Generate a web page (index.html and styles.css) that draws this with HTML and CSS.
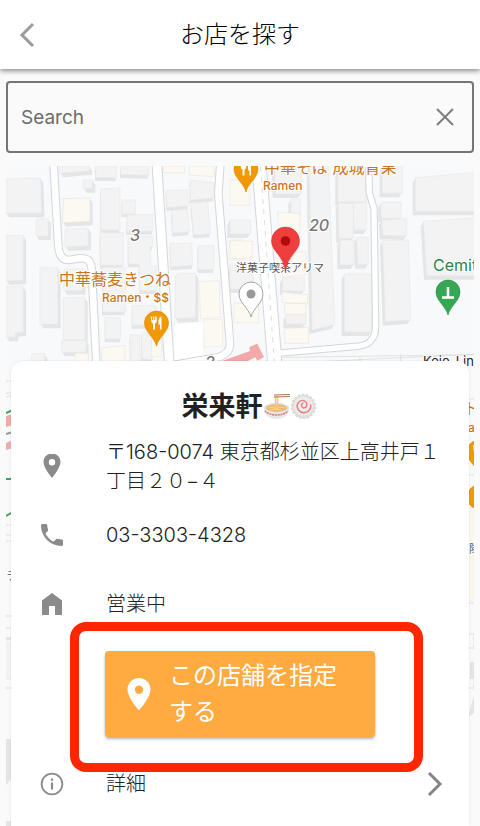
FILE: index.html
```html
<!DOCTYPE html>
<html lang="ja">
<head>
<meta charset="utf-8">
<meta name="viewport" content="width=device-width, initial-scale=1">
<title>お店を探す</title>
<link rel="stylesheet" href="styles.css">
</head>
<body>
<header class="bar">
  <button class="icon-button" type="button" aria-label="戻る">
    <svg width="16" height="26" viewBox="0 0 16 26" fill="none" stroke="#9b9b9b" stroke-width="3"><path d="M14 2 3 13l11 11"/></svg>
  </button>
  <h1 class="bar-title">お店を探す</h1>
</header>
<main class="content">
  <form class="search">
    <input class="search-input" type="text" placeholder="Search" aria-label="Search">
    <button class="icon-button" type="button" aria-label="クリア">
      <svg width="18" height="18" viewBox="0 0 18 18" fill="none" stroke="#7d7d7d" stroke-width="2"><path d="m1 1 16 16M17 1 1 17"/></svg>
    </button>
  </form>
  <div class="stage">
    <svg class="map" viewBox="6 166 468 660" preserveAspectRatio="xMidYMin slice" aria-label="地図">
      <defs>
        <g id="fork" fill="#fff"><path d="M-6-6.500h1.400v3.500h1v-3.500h1.400v3.500h1v-3.500h1.400v4.500q0 2-1.700 2.500v6h-2v-6q-1.700-.5-1.700-2.500zM2-2q0-4 3-4.500V6.500H3.500V1.500H2z"/></g>
        <path id="pin" d="M0 23C-2 14-12 9-12 0a12 12 0 0 1 24 0C12 9 2 14 0 23z"/>
        <path id="west" d="M18 58 28 56 122 54 125 160H18zM108 177l37-1v52h-37zM18 227l52-1v135l-52 2zM18 380l52-2v138l-23 2-1 14H18zM178 18h90v14l-88 8zM250 60h28v26h-28zM190 116l80-2v70l-82 4zM195 208l70-4v54l-70 3zM120 323h54v170h-54zM192 328l56-2v66h-56zM190 414l65-2v127h-65zM185 542h73v35h-73zM95 581h39v25H95zM527 345l22-5h38v133l-62 3z"/>
        <path id="mid" d="M287 18h62v35h-62zM362 18h84v28l-84-2zM302 86l58-2v126h-57zM366 120h40v42h-40zM382 164h76v50h-78zM300 218h70v98h-68zM385 230h73v30h-7v58h19v74h-50l-3-80h-32zM308 322h68v134h-68zM397 437h70v59h-70zM316 472l46 2v63h-46zM390 524l30 2v78h-28zM425 518l32 1v80l-31-3zM499 92l64-3 3 49-65 5zM570 60l71 8v46l-70 6zM572 133l51-5 9 94-50 3zM514 152l49-5 5 68-49 5zM510 250h65l3 66-65 5zM594 257h48v72h-48zM690 312h40v76h-40z"/>
        <path id="east" d="M134 18h80v84h-78zM183 118h28v55h-28zM238 18h57l19 477-68 15zM324 18h85v108h-85zM325 130h45v106h-43zM370 128h40v82h-38zM330 240h42v75h-42zM380 232h35v82h-32zM343 342h82v174h-82zM457 18h60v82h-60zM453 127h60v48h-60zM455 180l75-4v52l-72-2zM458 242l77-2 7 240-76 5zM0 180h62v42H0zM0 332h70v55H0zM158 353h65v40h-65zM168 465h60v27h-60zM556 53l194-17v118H556zM580 184l170-12v175H590z"/>
      </defs>
      <rect x="6" y="166" width="468" height="660" fill="#f8f9fb"/>
      <g transform="translate(0 160) scale(.3333)" stroke-width="2">
        <use href="#west" x="8" y="12" fill="#e4e5e6"/><use href="#west" x="4" y="6" fill="#e4e5e6"/>
        <use href="#west" fill="#f3f3f3" stroke="#e8e9ea"/>
        <use href="#mid" x="-2" y="10" fill="#e4e5e6"/>
        <use href="#mid" fill="#f3f3f3" stroke="#e8e9ea"/>
        <path fill="#fcf9f2" stroke="#ece7df" d="M190 116l80-2v70l-82 4zM597 366l60-5 5 111-60 5zM610 480l58-2v80l-56 4zM305 564l70-8v60h-70zM455 535h30v55h-30zM490 18h64v20h-64zM568 18h75v32l-75-5zM690 240h40v60h-40zM225 580h40v30h-40z"/>
        <path fill="#fff" d="m526 493 85-5-2 105-90 10z"/>
      </g>
      <g transform="translate(230 160) scale(.3333)" stroke-width="2">
        <use href="#east" x="-8" y="12" fill="#e4e5e6"/><use href="#east" x="-4" y="6" fill="#e4e5e6"/>
        <use href="#east" fill="#f3f3f3" stroke="#e8e9ea"/>
        <path fill="#fcf9f2" stroke="#ece7df" d="M0 60h60v76H0zM0 242l68 2-2 52H0zM142 156l68 5v60h-62zM150 276h78v68l-70 8zM155 396l78 8v28l-76-5zM164 430h64v33h-64zM164 506l72-4v48h-72zM12 430h74v58H12z"/>
      </g>
      <g transform="translate(0 160) scale(.3333)" fill="none" stroke-linejoin="round">
        <g stroke="#d2d6da" stroke-width="26"><path d="M160 0 175 258Q178 300 205 300L240 295Q272 292 275 325L290 630"/><path d="M662 0 655 100 690 550Q692 582 650 593L520 615"/><path d="m470 0 39 630" stroke-width="32"/></g>
        <g stroke="#fff" stroke-width="20"><path d="M160 0 175 258Q178 300 205 300L240 295Q272 292 275 325L290 630"/><path d="M662 0 655 100 690 550Q692 582 650 593L520 615"/><path d="m470 0 39 630" stroke-width="26"/></g>
      </g>
      <g transform="translate(230 160) scale(.3333)" fill="none" stroke-linejoin="round">
        <path stroke="#d2d6da" stroke-width="46" d="m86 0 50 630"/>
        <path stroke="#d2d6da" stroke-width="22" d="m416 0 2 100 14 45 5 350Q438 550 390 558L140 580"/>
        <path stroke="#fff" stroke-width="40" d="m86 0 50 630"/>
        <path stroke="#fff" stroke-width="16" d="m416 0 2 100 14 45 5 350Q438 550 390 558L140 580"/>
        <path stroke="#c9cbd0" stroke-width="2" stroke-dasharray="16 16" d="m92 20 42 600"/>
        <path stroke="#d2d6da" stroke-width="2" d="m160 610 590-28M160 592l590-8M390 590v20M512 584v20"/>
        <path fill="#f1aaaa" d="m-30 605 90-32-2-12 24-10 20 40-20 11-6-10-30 15z"/>
      </g>
      <!-- strips of the map that stay visible beside the sheet -->
      <g fill="none" stroke="#dcdfe2">
        <path d="M6 381h7v12H6M6 397l7-2M6 525h7v10H6M6 541h7v30M6 616h7v12H6M6 679h7v9H6M467 399h7M468 475h6M468 603h6M468 634h6v14h-6M468 678h6v10h-6"/>
        <path stroke="#3ea55d" stroke-width="2" d="m6 413 7-3M6 479h7M6 516l7-4"/>
      </g>
      <path fill="#f1aaaa" d="m6 416 7-2v11l-7 2zM6 443l7-3v8l-7 2z"/>
      <path fill="none" stroke="#999" stroke-width="2" d="m6 434 7-2"/>
      <path fill="#e3e4e6" d="M6 637h7v3H6zM6 739h7v38l-7 8zM6 821h7v5H6zM470 662h4v17h-4zM474 695v18l-6 4z"/>
      <path fill="#f2f2f2" d="M6 641h7v38H6z"/>
      <path fill="#fbf6ea" d="M468 510h6v92h-6z"/>
      <g class="map-text">
        <g fill="#c9751c">
          <text x="264" y="173" font-size="16">中華そば 成城青果</text>
          <text class="kind" x="263" y="190" font-size="12">Ramen</text>
          <text x="59" y="285" font-size="16">中華蕎麦きつね</text>
          <text class="kind" x="102" y="302" font-size="12">Ramen・$$</text>
          <text x="463" y="414" font-size="16">ト</text>
          <text class="kind" x="468" y="432" font-size="12">a</text>
        </g>
        <g class="block-number" font-size="16">
          <text x="130" y="241">3</text><text x="309" y="231">20</text><text x="205" y="368">2</text>
        </g>
        <text x="236" y="272" font-size="11" fill="#555">洋菓子喫茶アリマ</text>
        <text x="433" y="271" font-size="16" fill="#238545">Cemitério</text>
        <text x="423" y="366" font-size="13" fill="#222">Keio-Line</text>
        <text x="6" y="580" font-size="11" fill="#555">ラ</text>
        <text x="469" y="553" font-size="11" fill="#555">隊</text>
      </g>
      <g fill="#f29900" stroke="#d98300" stroke-width=".6">
        <use href="#pin" x="246" y="169"/><use href="#pin" x="156.500" y="323"/><use href="#pin" x="479" y="452"/><circle cx="479" cy="497" r="12"/>
      </g>
      <use href="#fork" x="246" y="169"/><use href="#fork" x="156.500" y="323"/><use href="#fork" x="479" y="452"/>
      <use href="#pin" x="251" y="294" fill="#fff" stroke="#a5a5a5"/><circle cx="251" cy="294" r="4.500" fill="#999"/>
      <use href="#pin" x="448" y="292" fill="#34a853" stroke="#238545" stroke-width=".6"/>
      <path fill="none" stroke="#fff" stroke-width="2.500" d="M448 287v11M442 297.500h12"/>
      <path fill="#ef3e3e" stroke="#dc3434" stroke-width=".5" d="M285.500 272.500C284 255 271.500 252 271.500 241a14 14 0 0 1 28 0c0 11-12.500 14-14 31.500z"/>
      <circle cx="285.500" cy="241" r="4.800" fill="#b30b0b"/>
    </svg>
    <section class="sheet">
      <h2 class="shop">
        <span>栄来軒</span>
        <svg width="27" height="27" viewBox="0 0 27 27" aria-hidden="true">
          <ellipse cx="13.500" cy="15" rx="12.500" ry="5" fill="#dcdedf"/><path d="M1 15c0 7 5 11 12.500 11S26 22 26 15q-5 5-12.500 5T1 15z" fill="#e7e8e9"/>
          <ellipse cx="13.500" cy="15" rx="10.500" ry="3.700" fill="#edb768"/>
          <path d="M2 18q4 4 11.500 4T25 18" fill="none" stroke="#dd7770" stroke-width="1.500" stroke-dasharray="2 .7"/>
          <path d="M12.500 3v12M14.500 3v12" stroke="#f4c980" stroke-width="1.500"/><path d="m5 15 5-1 3 2 4-2 5 1M7 17l5-1 7 1" fill="none" stroke="#f8d795"/>
          <path d="m11 2 16-.5M11 4l16-.5" stroke="#ad7750" stroke-width="1.200"/>
        </svg>
        <svg width="27" height="27" viewBox="0 0 27 27" aria-hidden="true">
          <circle cx="13.500" cy="13.500" r="11.300" fill="#e2e2dd"/><circle cx="13.500" cy="13.500" r="11.500" fill="none" stroke="#d9dad4" stroke-width="2.200" stroke-dasharray="2.800 1.200"/>
          <circle cx="13.500" cy="13" r="9.500" fill="#ecece8"/>
          <path d="M13 10q-2.500 1.500-1 3.800t4.200 0Q18 10.500 15 8.300T8.800 9Q5.500 13 8.500 17t8.500 2q4-2 3.800-7" fill="none" stroke="#e77c83" stroke-width="1.400" stroke-linecap="round"/>
        </svg>
      </h2>
      <div class="row">
        <svg class="row-icon" viewBox="0 0 24 24"><path fill="#8b8b8b" fill-rule="evenodd" d="M12-.5c-4.800 0-8.500 3.700-8.500 8.500C3.500 14 12 24 12 24s8.500-10 8.500-16C20.500 3.200 16.800-.5 12-.5zM12 5a3.200 3.200 0 1 1 0 6.400A3.200 3.200 0 0 1 12 5z"/></svg>
        <p class="row-text">〒168-0074 東京都杉並区上高井戸１丁目２０−４</p>
      </div>
      <div class="row">
        <svg class="row-icon" viewBox="0 0 24 24"><path fill="#8b8b8b" d="M1 2.300Q1 1 2.200 1h3.900q1.200 0 1.200 1.200 0 2.300.8 4.400.2.700-.3 1.300L5.400 10.500q2.800 5.500 8.200 8.200l2.600-2.600q.5-.5 1.300-.3 2.100.7 4.300.7 1.200 0 1.200 1.200v4q0 1.300-1.200 1.300C10.300 23 1 13.700 1 2.300z"/></svg>
        <p class="row-text">03-3303-4328</p>
      </div>
      <div class="row">
        <svg class="row-icon" viewBox="0 0 24 24"><path fill="#8b8b8b" d="M2 8.500 12 1l10 7.500V23h-7v-9H9v9H2z"/></svg>
        <p class="row-text">営業中</p>
      </div>
      <div class="action">
        <button class="choose" type="button">
          <svg width="24" height="34" viewBox="0 0 24 34"><path fill="#fff" fill-rule="evenodd" d="M12 1C5.600 1 .5 6 .5 12.300.5 21 12 33.500 12 33.500S23.500 21 23.500 12.300C23.500 6 18.400 1 12 1zm0 7.500a4.200 4.200 0 1 1 0 8.400 4.200 4.200 0 0 1 0-8.400z"/></svg>
          <span>この店舗を指定する</span>
        </button>
        <span class="highlight"></span>
      </div>
      <a class="row" href="#detail">
        <svg class="row-icon info" viewBox="0 0 26 26" fill="none" stroke="#8b8b8b" stroke-width="2"><circle cx="13" cy="13" r="11.200"/><path stroke-width="2.400" d="M13 11.500v7.500M13 7v2.400"/></svg>
        <span class="row-text">詳細</span>
        <svg class="chevron" width="16" height="26" viewBox="0 0 16 26" fill="none" stroke="#858585" stroke-width="3"><path d="m2 2 11 11L2 24"/></svg>
      </a>
    </section>
  </div>
</main>
</body>
</html>
```
FILE: styles.css
```css
* {
  box-sizing: border-box;
}

body {
  display: flex;
  flex-direction: column;
  min-height: 100vh;
  margin: 0;
  background: #fafafa;
  color: #212121;
  font-family: Inter, "Noto Sans CJK JP", sans-serif;
  font-weight: 300;
}

h1,
h2,
p {
  margin: 0;
}

button {
  padding: 0;
  border: 0;
  font: inherit;
}

svg {
  display: block;
  flex: none;
}

.bar {
  display: grid;
  grid-template-columns: 54px 1fr 54px;
  align-items: center;
  height: 69px;
  background: #fff;
  box-shadow: 0 2px 5px rgba(0, 0, 0, 0.45);
}

.bar-title {
  color: #000;
  font-size: 24px;
  font-weight: 300;
  line-height: 36px;
  text-align: center;
}

.icon-button {
  display: grid;
  place-items: center;
  width: 54px;
  height: 48px;
  background: none;
}

.content {
  display: flex;
  flex: 1;
  flex-direction: column;
  gap: 13px;
  padding: 12px 6px 0;
}

.search {
  display: flex;
  align-items: center;
  height: 72px;
  border: 2px solid #757575;
  border-radius: 4px;
}

.search-input {
  flex: 1;
  min-width: 0;
  height: 100%;
  padding: 0 13px;
  border: 0;
  outline: 0;
  background: none;
  font: inherit;
  font-size: 19px;
  font-weight: 400;
}

.search-input::placeholder {
  color: #6c6c6c;
  opacity: 1;
}

.stage {
  position: relative;
  display: flex;
  flex: 1;
  overflow: hidden;
}

.map {
  position: absolute;
  inset: 0;
  width: 100%;
  height: 100%;
}

.map-text {
  font-weight: 400;
  stroke: #fff;
  stroke-width: 2px;
}

.map-text text {
  paint-order: stroke;
}

.map-text .kind {
  font-weight: 500;
}

.block-number {
  fill: #777;
  font-style: italic;
  font-weight: 500;
}

.sheet {
  position: relative;
  flex: 1;
  margin: 195px 5px 0;
  padding: 9px 0 8px;
  border-radius: 12px 12px 0 0;
  background: #fff;
  box-shadow: 0 0 2px rgba(0, 0, 0, 0.12);
}

.shop {
  display: flex;
  align-items: center;
  justify-content: center;
  height: 61px;
  padding: 12px 0 0 18px;
  font-size: 27px;
  font-weight: 700;
  line-height: 40px;
}

.row {
  display: flex;
  align-items: center;
  gap: 42px;
  min-height: 69px;
  padding: 0 26px 0 29px;
  color: inherit;
  text-decoration: none;
}

.row-icon {
  width: 24px;
  height: 24px;
}

.row-text {
  flex: 1;
  padding-top: 2px;
  font-size: 20px;
  line-height: 29px;
}

.action {
  position: relative;
  margin: 13px 94px 12px;
}

.choose {
  display: flex;
  align-items: center;
  gap: 18px;
  width: 100%;
  min-height: 86px;
  padding: 7px 30px 7px 22px;
  border-radius: 4px;
  background: #ffab40;
  box-shadow: 0 2px 3px rgba(0, 0, 0, 0.3);
  color: #fff;
  font-size: 24px;
  font-weight: 400;
  line-height: 36px;
  text-align: left;
}

.highlight {
  position: absolute;
  inset: -29px -48px -35px -35px;
  border: 9px solid #ff2600;
  border-radius: 16px;
  pointer-events: none;
}
```
